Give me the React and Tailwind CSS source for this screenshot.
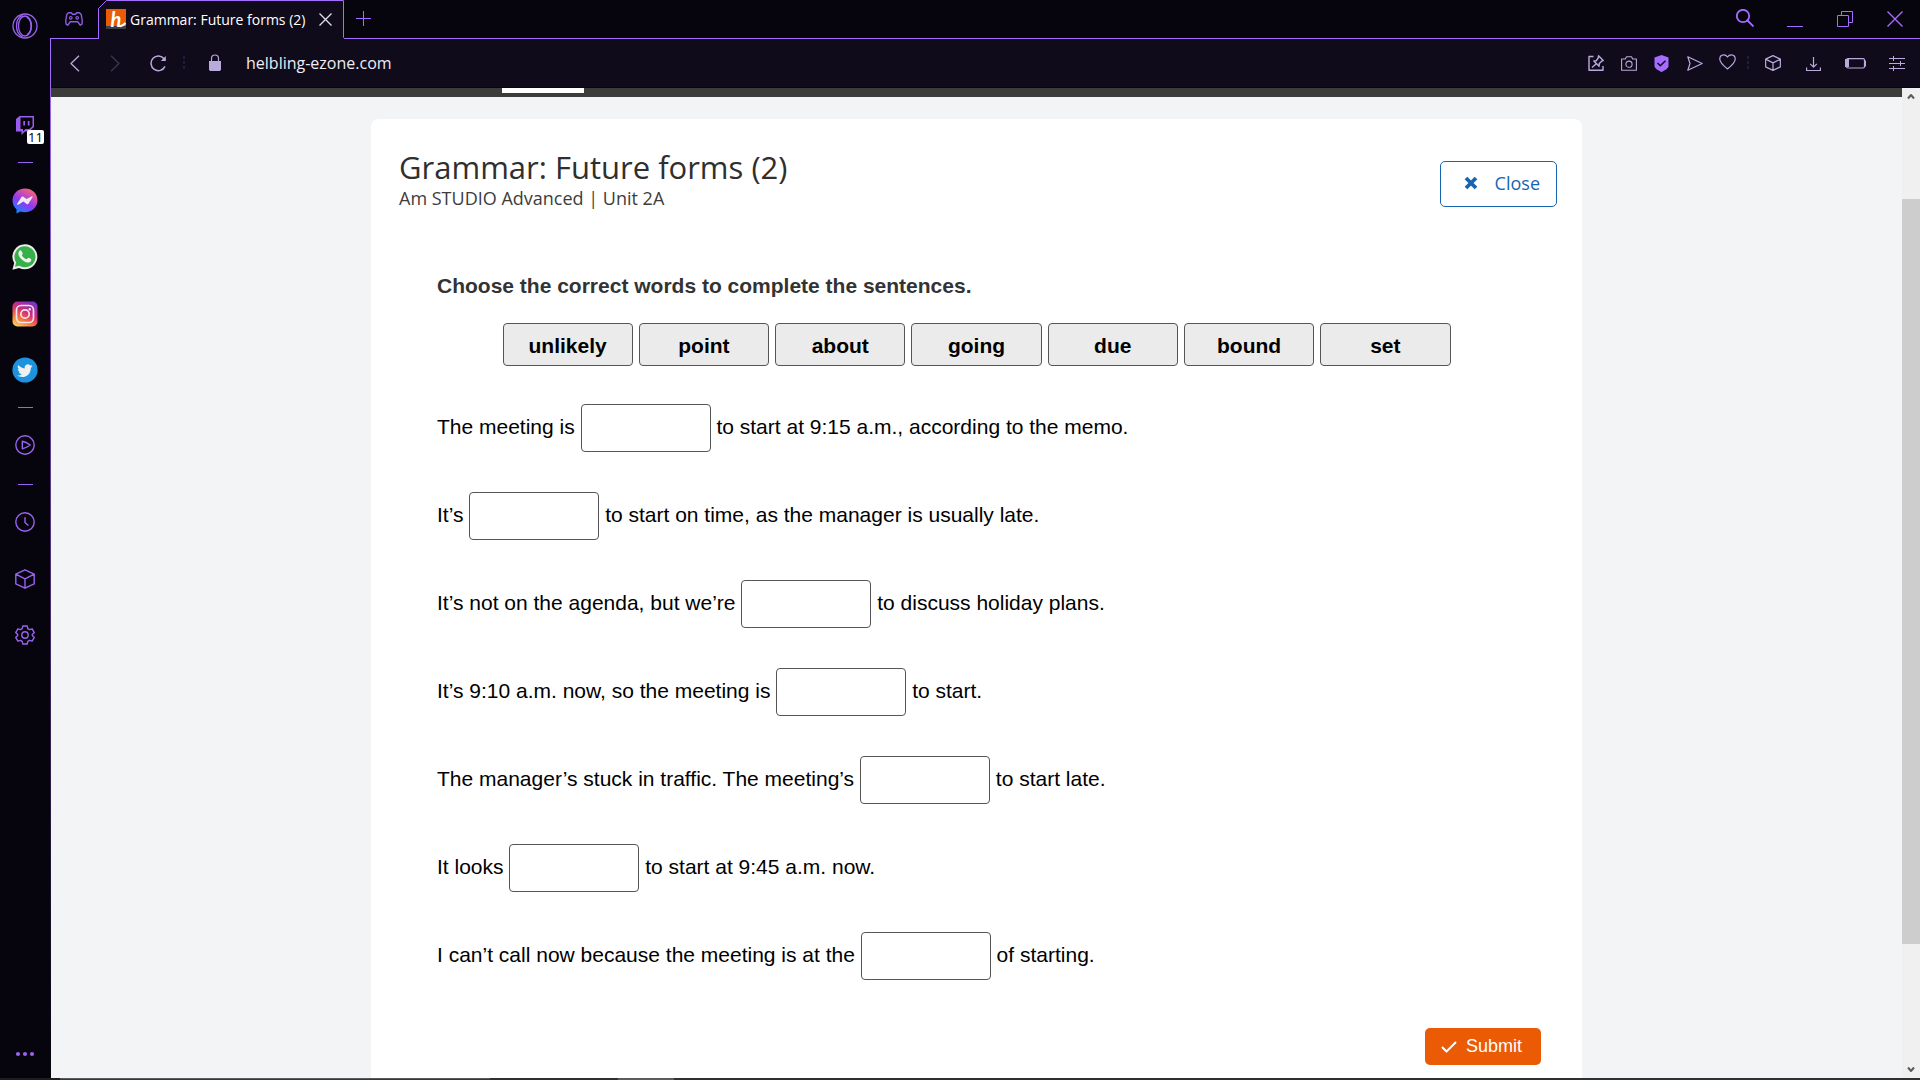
import React from "react";

const words = ["unlikely", "point", "about", "going", "due", "bound", "set"];

const sentences = [
  ["The meeting is", "to start at 9:15 a.m., according to the memo."],
  ["It’s", "to start on time, as the manager is usually late."],
  ["It’s not on the agenda, but we’re", "to discuss holiday plans."],
  ["It’s 9:10 a.m. now, so the meeting is", "to start."],
  ["The manager’s stuck in traffic. The meeting’s", "to start late."],
  ["It looks", "to start at 9:45 a.m. now."],
  ["I can’t call now because the meeting is at the", "of starting."],
];

function Icon({ w = 16, h = 16, children, className = "", sw = 1.3 }) {
  return (
    <svg
      width={w}
      height={h}
      viewBox={`0 0 ${w} ${h}`}
      fill="none"
      stroke="currentColor"
      strokeWidth={sw}
      strokeLinejoin="round"
      className={className}
      aria-hidden="true"
    >
      {children}
    </svg>
  );
}

function SideButton({ label, className, children }) {
  return (
    <button type="button" aria-label={label} className={`flex w-full shrink-0 items-center justify-center ${className}`}>
      {children}
    </button>
  );
}

function Divider({ className }) {
  return <div className={`h-px w-[15px] shrink-0 bg-[#9a62f0] ${className}`} />;
}

function Cube({ size, sw }) {
  return (
    <svg width={size} height={size} viewBox="0 0 20 20" fill="none" stroke="currentColor" strokeWidth={sw} strokeLinejoin="round" aria-hidden="true">
      <path d="M10 .8 19.2 5.2v9.6L10 19.2.8 14.8V5.2zM.8 5.2 10 9.8l9.2-4.6M10 9.8v9.4" />
    </svg>
  );
}

function Sidebar() {
  return (
    <aside className="flex w-[50px] shrink-0 flex-col items-center bg-[#06040c] text-[#9a62f0]">
      <SideButton label="Opera menu" className="mt-[13px] h-[25px]">
        <Icon w={26} h={26} sw={1.3}>
          <circle cx="13" cy="13" r="12" />
          <ellipse cx="13" cy="13" rx="6.500" ry="10" />
          <path d="M15 4.2c5.400 3.500 5.400 14 0 17.600" />
          <path d="M10.500 2.200c-8 3.800-8 17.800 0 21.600" />
        </Icon>
      </SideButton>

      <SideButton label="Twitch, 11 notifications" className="mt-[78px] h-[20px]">
        <span className="relative block h-[20px] w-[18px]">
          <svg width="18" height="20" viewBox="0 0 18 20" aria-hidden="true">
            <path d="M3.500 0H18v11l-5 4.500H9L5.500 19v-3.500H0V3z" fill="#9a5cf0" />
            <path d="M4.500 1.500h12v8.700L13.300 13H9.500L7 15.200V13H4.500z" fill="#06040c" />
            <path d="M7.300 5H9v4.500H7.300zM11.800 5h1.700v4.500h-1.700z" fill="#9a5cf0" />
          </svg>
          <span className="absolute left-[11px] top-[14px] flex h-[14px] w-[17px] items-center justify-center rounded-xs bg-white font-['Open_Sans',sans-serif] text-[13px] leading-none text-black">
            11
          </span>
        </span>
      </SideButton>

      <Divider className="mt-[26px]" />

      <SideButton label="Messenger" className="mt-[25px] h-[26px]">
        <svg width="26" height="26" viewBox="0 0 26 26" aria-hidden="true">
          <defs>
            <linearGradient id="msg" x1=".2" y1="1" x2=".75" y2="0">
              <stop offset="0" stopColor="#0a8cff" />
              <stop offset=".45" stopColor="#9038f4" />
              <stop offset="1" stopColor="#ff6470" />
            </linearGradient>
          </defs>
          <path d="M13 .5C5.900.500.500 5.600.500 12.500c0 3.600 1.500 6.600 4 8.700V25.500l4-2c1.400.4 3 .7 4.500.7 7.100 0 12.500-5 12.500-11.900S20.100.500 13 .5z" fill="url(#msg)" />
          <path d="m5.200 15.800 4.300-6.800c.5-.6 1.200-.7 1.800-.3l3.200 2.400 5-2.700c.7-.4 1.400.2 1 .9l-4.100 6.400c-.5.6-1.200.7-1.800.3l-3.200-2.400-5.200 3.100c-.7.400-1.400-.200-1-.9z" fill="#f0ebee" />
        </svg>
      </SideButton>

      <SideButton label="WhatsApp" className="mt-[30px] h-[26px]">
        <svg width="26" height="26" viewBox="0 0 26 26" aria-hidden="true">
          <path d="M13 .3A12.500 12.500 0 0 0 2.200 19.100L.4 25.700l6.700-1.800A12.500 12.500 0 1 0 13 .3z" fill="#ececec" />
          <path d="M13 2.300A10.500 10.500 0 0 0 4.100 18.400L3 22.800l4.400-1.100A10.500 10.500 0 1 0 13 2.300z" fill="#38b04a" />
          <path d="M9.200 6.800c-.4-.7-1.200-.5-1.700 0-2.200 2.200-.9 5.400 1.600 8 2.700 2.900 6.300 4.700 8.900 3.200 1.200-.8 1.500-2 1.300-2.600-.5-.7-1.900-1.200-2.700-1.600-.8-.3-1.300 1.500-2 1.500-1.500-.2-4.600-2.900-4.700-4 0-.5 1.100-1.200.9-1.900z" fill="#f0f0f0" />
        </svg>
      </SideButton>

      <SideButton label="Instagram" className="mt-[31px] h-[26px]">
        <svg width="26" height="26" viewBox="0 0 26 26" aria-hidden="true">
          <defs>
            <linearGradient id="ig" x1=".15" y1="1" x2=".7" y2="0">
              <stop offset="0" stopColor="#ffd25a" />
              <stop offset=".3" stopColor="#f77a3a" />
              <stop offset=".6" stopColor="#d62a78" />
              <stop offset="1" stopColor="#7a35c4" />
            </linearGradient>
          </defs>
          <rect x=".5" y=".5" width="25" height="25" rx="5" fill="url(#ig)" />
          <rect x="4.500" y="4.500" width="17" height="17" rx="4.500" fill="none" stroke="#f0e6ea" strokeWidth="1.700" />
          <circle cx="13" cy="13" r="4.200" fill="none" stroke="#f0e6ea" strokeWidth="1.700" />
          <circle cx="17.800" cy="8.300" r="1.200" fill="#f0e6ea" />
        </svg>
      </SideButton>

      <SideButton label="Twitter" className="mt-[30px] h-[26px]">
        <svg width="26" height="26" viewBox="0 0 26 26" aria-hidden="true">
          <circle cx="13" cy="13" r="12.600" fill="#1d93e0" />
          <path d="M20.500 8.900c-.6.3-1.200.4-1.800.5.600-.4 1.100-1 1.400-1.700-.6.4-1.300.6-2 .8a3.150 3.150 0 0 0-5.400 2.900c-2.600-.1-5-1.400-6.500-3.300-.9 1.500-.4 3.300 1 4.200-.5 0-1-.2-1.400-.4 0 1.500 1.100 2.800 2.500 3.100-.5.1-1 .1-1.400 0 .4 1.300 1.600 2.200 3 2.200-1.300 1-3 1.500-4.700 1.300 5.700 3.600 13.700.3 13.600-7.600.7-.6 1.300-1.200 1.700-2z" fill="#f0f0f0" />
        </svg>
      </SideButton>

      <Divider className="mt-[24px]" />

      <SideButton label="Player" className="mt-[27px] h-[20px]">
        <Icon w={20} h={20} sw={1.400}>
          <circle cx="10" cy="10" r="9.200" />
          <path d="M7.300 6.300v7.400c2.900-.5 5.400-1.900 8-3.700-2.600-1.800-5.100-3.200-8-3.700z" />
        </Icon>
      </SideButton>

      <Divider className="mt-[29px]" />

      <SideButton label="History" className="mt-[27px] h-[20px]">
        <Icon w={20} h={20} sw={1.400}>
          <circle cx="10" cy="10" r="9.200" />
          <path d="M10 5.200v5.200l3.400 3.200" />
        </Icon>
      </SideButton>

      <SideButton label="Extensions" className="mt-[37px] h-[20px]">
        <Cube size={20} sw={1.400} />
      </SideButton>

      <SideButton label="Settings" className="mt-[36px] h-[20px]">
        <Icon w={20} h={20} sw={1.400}>
          <path d="M7.800 1h4.400l.6 2.700 1.700 1 2.600-.9 2.200 3.800-2 1.900v1l2 1.900-2.200 3.800-2.600-.9-1.700 1-.6 2.700H7.800l-.6-2.700-1.700-1-2.600.9-2.200-3.800 2-1.900v-1l-2-1.900 2.200-3.800 2.600.9 1.700-1z" />
          <circle cx="10" cy="10" r="3.200" />
        </Icon>
      </SideButton>

      <SideButton label="More" className="mb-[18px] mt-auto h-[12px]">
        <svg width="20" height="6" viewBox="0 0 20 6" fill="#9a62f0" aria-hidden="true">
          <circle cx="3" cy="3" r="2.100" />
          <circle cx="10" cy="3" r="2.100" />
          <circle cx="17" cy="3" r="2.100" />
        </svg>
      </SideButton>
    </aside>
  );
}

function WindowButton({ label, children }) {
  return (
    <button type="button" aria-label={label} className="flex w-[50px] items-center justify-center">
      {children}
    </button>
  );
}

function TabBar() {
  return (
    <div className="flex h-[39px] shrink-0 bg-[#06040c] text-[#a66cff]">
      <div className="flex w-[48px] shrink-0 justify-center border-b border-[#a66cff]">
        <button type="button" aria-label="GX corner" className="h-[38px]">
          <Icon w={18} h={14} sw={1.400} className="text-[#8f5be0]">
            <path d="M3.500.8h2.800l1.200 1.400h3l1.200-1.400h2.800l1.700 1.600 1.100 6.600-.4 3.200-1.600 1-2.600-3.400H5.300l-2.600 3.400-1.600-1L.7 9l1.100-6.600z" />
            <circle cx="5.800" cy="5.800" r="1.300" strokeWidth="1.200" />
            <circle cx="12.200" cy="5.800" r="1.300" strokeWidth="1.200" />
          </Icon>
        </button>
      </div>
      <div className="relative flex w-[246px] shrink-0 items-center pb-[1px] pl-[8px]">
        <svg className="absolute inset-0" width="247" height="39" viewBox="0 0 247 39" aria-hidden="true">
          <path d="M.5 39V8.500l8-8h237v37l1.500 1.500z" fill="#0f0b1b" />
          <path d="M.5 39V8.500l8-8h237v37l1.500 1.500" fill="none" stroke="#a66cff" />
        </svg>
        <span className="relative flex h-[20px] w-[20px] items-center justify-center bg-[#eb5a05] bg-linear-to-t from-[#3d3d3b] from-15% to-[#eb5a05] to-15% font-['Lato',sans-serif] text-[20px] font-bold italic leading-[20px] text-white">
          h
          <svg className="absolute inset-0" width="20" height="20" viewBox="0 0 20 20" aria-hidden="true">
            <path d="M12.500 16.500q3 2 7-2.500" fill="none" stroke="#fff" strokeWidth="2" />
          </svg>
        </span>
        <span className="relative ml-[4px] whitespace-nowrap font-['Open_Sans',sans-serif] text-[14px] text-white">
          Grammar: Future forms (2)
        </span>
        <button type="button" aria-label="Close tab" className="relative ml-auto mr-[12px] text-[#e4e0ee]">
          <Icon w={13} h={13} sw={1.300}>
            <path d="m.5.5 12 12m0-12-12 12" />
          </Icon>
        </button>
      </div>
      <div className="flex flex-1 justify-between border-b border-[#a66cff]">
        <button type="button" aria-label="New tab" className="ml-[12px] flex items-center pb-[1px]">
          <Icon w={15} h={15} sw={1}>
            <path d="M7.500 0v15M0 7.500h15" />
          </Icon>
        </button>
        <div className="flex">
          <WindowButton label="Search tabs">
            <Icon w={18} h={18} sw={1.800} className="mb-[2px]">
              <circle cx="7" cy="7" r="6.200" />
              <path d="m11.500 11.500 6 6" />
            </Icon>
          </WindowButton>
          <WindowButton label="Minimize">
            <Icon w={16} h={16} sw={1}>
              <path d="M0 15.500h16" />
            </Icon>
          </WindowButton>
          <WindowButton label="Restore">
            <Icon w={16} h={16} sw={1}>
              <path d="M.5 4.500h11v11H.5zM4.500 4.500v-4h11v11h-4" />
            </Icon>
          </WindowButton>
          <WindowButton label="Close window">
            <Icon w={16} h={16} sw={1.400}>
              <path d="m.5.5 15 15m0-15-15 15" />
            </Icon>
          </WindowButton>
        </div>
      </div>
    </div>
  );
}

function ToolButton({ label, className = "w-[33px]", children }) {
  return (
    <button type="button" aria-label={label} className={`flex h-full items-center justify-center ${className}`}>
      {children}
    </button>
  );
}

function Dots() {
  return (
    <svg width="2" height="14" viewBox="0 0 2 14" fill="#241c40" aria-hidden="true">
      <path d="M0 0h2v3H0zM0 5h2v3H0zM0 10h2v3H0z" />
    </svg>
  );
}

function Toolbar() {
  return (
    <div className="flex h-[49px] shrink-0 items-center justify-between border-b border-[#06040c] bg-[#0f0b1b] text-[#b9aade]">
      <div className="flex h-full min-w-0 flex-1 items-center">
        <ToolButton label="Back" className="ml-[7px] w-[34px]">
          <Icon w={10} h={17} sw={1.300}>
            <path d="M9 .8 1 8.500l8 7.700" />
          </Icon>
        </ToolButton>
        <ToolButton label="Forward" className="ml-[6px] w-[34px] text-[#3d3555]">
          <Icon w={10} h={17} sw={1.300}>
            <path d="m1 .8 8 7.700-8 7.700" />
          </Icon>
        </ToolButton>
        <ToolButton label="Reload" className="ml-[9px] w-[34px]">
          <Icon w={17} h={17} sw={1.500}>
            <path d="M15 11.400A7.300 7.300 0 1 1 14.200 4" />
            <path d="M15.800 1v5h-5z" fill="currentColor" stroke="none" />
          </Icon>
        </ToolButton>
        <span className="ml-[8px]">
          <Dots />
        </span>
        <span className="ml-[24px]">
          <svg width="12" height="17" viewBox="0 0 12 17" className="mb-[2px]" aria-hidden="true">
            <path d="M2.500 8V4.500a3.500 3.500 0 0 1 7 0V8" fill="none" stroke="#b9aade" strokeWidth="1.200" />
            <path d="M0 7h12v8.500L11 17H1l-1-1.500z" fill="#b9aade" />
          </svg>
        </span>
        <input
          aria-label="Address"
          defaultValue="helbling-ezone.com"
          className="ml-[25px] min-w-0 flex-1 bg-transparent font-['Open_Sans',sans-serif] text-[16px] text-[#eeecf4] outline-none"
        />
      </div>
      <div className="flex h-full shrink-0 items-center pr-[2px]">
        <ToolButton label="Pin board">
          <Icon w={16} h={16} sw={1.400}>
            <path d="M5.500 1.500H1v13.700h14V11" />
            <path d="m10.500.8 4.700 4.700-1.500.7-2.400 2.400-.2 2.600-5.300-5.300 2.600-.2L10.200 3zM8 9l-4 3.500" />
          </Icon>
        </ToolButton>
        <ToolButton label="Snapshot">
          <Icon w={16} h={15} sw={1.100}>
            <path d="M.6 3h3.700L5.500.8h5L11.700 3h3.700v11.300H.6z" />
            <circle cx="8" cy="8.200" r="3.100" />
          </Icon>
        </ToolButton>
        <ToolButton label="Ad blocker">
          <svg width="15" height="17" viewBox="0 0 15 17" aria-hidden="true">
            <path d="M7.500 0 14.500 2.500v8.500c0 2.500-4 4.500-7 6-3-1.500-7-3.500-7-6V2.500z" fill="#a66cff" />
            <path d="m3.500 8 2.800 2.700 5.200-5" fill="none" stroke="#0f0b1b" strokeWidth="1.500" />
          </svg>
        </ToolButton>
        <ToolButton label="My Flow">
          <Icon w={16} h={15} sw={1.200}>
            <path d="M.8.800 15.200 7.500.8 14.200 3 7.500z" />
          </Icon>
        </ToolButton>
        <ToolButton label="Bookmark">
          <Icon w={17} h={16} sw={1.200} className="mb-[2px]">
            <path d="M8.500 3C7.300 1.300 6 .7 4.600.8 2 1 .7 3 .8 5.300.9 9 5 12.200 8.500 15c3.500-2.800 7.600-6 7.700-9.700C16.300 3 15 1 12.400.8 11 .7 9.700 1.300 8.500 3z" />
          </Icon>
        </ToolButton>
        <span className="flex w-[8px] justify-center">
          <Dots />
        </span>
        <ToolButton label="Extensions" className="w-[41px]">
          <Cube size={16} sw={1.500} />
        </ToolButton>
        <ToolButton label="Downloads" className="w-[41px]">
          <Icon w={15} h={15} sw={1.200}>
            <path d="M7.500 1v10M4.200 7.800l3.300 3.400 3.300-3.400M.6 11.500v3h13.800v-3" />
          </Icon>
        </ToolButton>
        <ToolButton label="Battery saver" className="w-[42px]">
          <Icon w={21} h={11} sw={1.200}>
            <rect x="1.500" y=".6" width="18" height="9.400" rx="1.500" />
            <path d="M0 1h4v8H0z" fill="currentColor" stroke="none" />
            <path d="M20.400 2.500v6" />
          </Icon>
        </ToolButton>
        <ToolButton label="Easy setup" className="w-[42px]">
          <Icon w={16} h={15} sw={1}>
            <path d="M0 2.500h16M0 7.500h16M0 12.500h16M4.500 0v5M11.500 5v5M4.500 10v5" />
          </Icon>
        </ToolButton>
      </div>
    </div>
  );
}

function Exercise() {
  return (
    <section className="mx-auto flex w-full max-w-[1211px] flex-1 flex-col rounded-t-lg bg-white">
      <header className="flex items-start justify-between pl-[28px] pr-[25px] pt-[28px] font-['Open_Sans',sans-serif]">
        <div className="text-[#2f2f2f]">
          <h1 className="text-[31px] leading-[40px]">Grammar: Future forms (2)</h1>
          <p className="text-[18px] leading-[22px] text-[#3d3d3d]">Am STUDIO Advanced | Unit 2A</p>
        </div>
        <button
          type="button"
          className="mt-[14px] flex h-[46px] w-[117px] items-center justify-end rounded-[5px] border border-[#1765b0] bg-white pb-[2px] pr-[16px] text-[18px] font-medium text-[#1765b0]"
        >
          <Icon w={14} h={14} sw={3.800} className="mr-[17px]">
            <path d="m2 2 10 10m0-10-10 10" />
          </Icon>
          Close
        </button>
      </header>

      <div className="mt-[62px] flex flex-col px-[66px] font-['Liberation_Sans',Arial,sans-serif] text-[21px] text-black">
        <h2 className="leading-[30px] font-bold text-[#333]">Choose the correct words to complete the sentences.</h2>
        <div className="mx-auto mt-[22px] grid w-full max-w-[948px] grid-cols-7 gap-[6px]">
          {words.map((word) => (
            <button key={word} type="button" className="h-[43px] rounded-[4px] border border-[#555] bg-[#ebebeb] pt-[3px] leading-[36px] font-bold">
              {word}
            </button>
          ))}
        </div>
        <ol className="mt-[38px] flex flex-col gap-[40px]">
          {sentences.map(([before, after], i) => (
            <li key={i} className="leading-[30px]">
              {before}{" "}
              <input
                aria-label={`Answer ${i + 1}`}
                className="inline-block h-[48px] w-[130px] rounded-[4px] border border-[#555] bg-white px-2 text-center align-middle"
              />{" "}
              {after}
            </li>
          ))}
        </ol>
      </div>

      <div className="mt-[48px] flex justify-end pr-[41px]">
        <button
          type="button"
          className="flex h-[37px] w-[116px] items-center justify-center gap-[9px] rounded-[5px] bg-[#eb5a05] pr-[3px] font-['Liberation_Sans',Arial,sans-serif] text-[18px] text-white"
        >
          <Icon w={16} h={12} sw={2}>
            <path d="m1 6 4.500 4.500L15 1" />
          </Icon>
          Submit
        </button>
      </div>
    </section>
  );
}

function Scrollbar() {
  return (
    <div className="flex w-[18px] shrink-0 flex-col items-center justify-between bg-[#f0f0f0] py-[5px] text-[#5c5c5c]">
      <Icon w={8} h={8} sw={2}>
        <path d="m1 5.500 3-3.500 3 3.500" />
      </Icon>
      <div className="mt-[98px] flex w-full flex-1 flex-col">
        <div className="w-full basis-[86%] bg-[#cdcdcd]" />
      </div>
      <Icon w={8} h={8} sw={2}>
        <path d="m1 2.500 3 3.500 3-3.500" />
      </Icon>
    </div>
  );
}

export default function App() {
  return (
    <div className="flex h-screen flex-col overflow-hidden bg-[#303032]">
      <div className="flex min-h-0 flex-1">
        <Sidebar />
        <div className="flex min-w-0 flex-1 flex-col">
          <TabBar />
          <div className="flex min-h-0 flex-1">
            <div className="w-px shrink-0 bg-linear-to-b from-[#a66cff] to-[#06040c]" />
            <div className="flex min-w-0 flex-1 flex-col">
              <Toolbar />
              <div className="flex min-h-0 flex-1">
                <main className="flex min-w-0 flex-1 flex-col overflow-hidden bg-[#f3f4f6]">
                  <div className="mb-[22px] h-[9px] shrink-0 bg-[#3c3c3b]">
                    <div className="ml-[451px] h-[5px] w-[82px] bg-white" />
                  </div>
                  <Exercise />
                </main>
                <Scrollbar />
              </div>
            </div>
          </div>
        </div>
      </div>
      <div className="flex h-[2px] shrink-0">
        <div className="w-[60px] bg-[#1d1d1f]" />
        <div className="w-[430px] border-t border-[#5a5a5c] bg-[#38383a]" />
        <div className="w-[128px]" />
        <div className="w-[56px] bg-[#5c5c5e]" />
      </div>
    </div>
  );
}
